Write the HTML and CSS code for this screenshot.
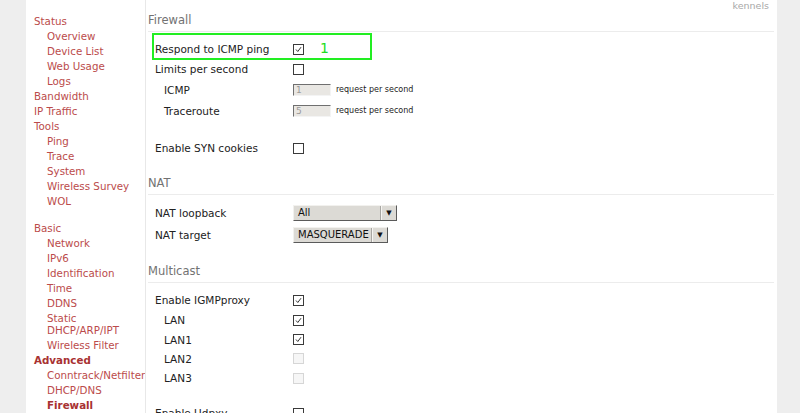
FILE: index.html
```html
<!DOCTYPE html>
<html>
<head>
<meta charset="utf-8">
<link rel="stylesheet" href="styles.css">
</head>
<body>
<div class="page">
  <nav class="sidebar">
    <a class="top">Status</a>
    <a class="sub">Overview</a>
    <a class="sub">Device List</a>
    <a class="sub">Web Usage</a>
    <a class="sub">Logs</a>
    <a class="top">Bandwidth</a>
    <a class="top">IP Traffic</a>
    <a class="top">Tools</a>
    <a class="sub">Ping</a>
    <a class="sub">Trace</a>
    <a class="sub">System</a>
    <a class="sub">Wireless Survey</a>
    <a class="sub">WOL</a>
    <a class="top group">Basic</a>
    <a class="sub">Network</a>
    <a class="sub">IPv6</a>
    <a class="sub">Identification</a>
    <a class="sub">Time</a>
    <a class="sub">DDNS</a>
    <a class="sub">Static DHCP/ARP/IPT</a>
    <a class="sub">Wireless Filter</a>
    <a class="top active">Advanced</a>
    <a class="sub nowrap">Conntrack/Netfilter</a>
    <a class="sub">DHCP/DNS</a>
    <a class="sub active">Firewall</a>
  </nav>
  <main class="content">
    <div class="host">kennels</div>
    <section class="section first">
      <h2 class="section-title">Firewall</h2>
      <div class="rows">
        <div class="row">
          <span class="label">Respond to ICMP ping</span>
          <span class="field"><svg class="cb" width="11" height="11" viewBox="0 0 11 11"><rect x="0.5" y="0.5" width="10" height="10" fill="#fff" stroke="#3a3a3a"/><polyline points="3,5.5 4.8,7.5 8,3.2" fill="none" stroke="#333" stroke-width="1"/></svg></span>
        </div>
        <div class="row">
          <span class="label">Limits per second</span>
          <span class="field"><svg class="cb" width="11" height="11" viewBox="0 0 11 11"><rect x="0.5" y="0.5" width="10" height="10" fill="#fff" stroke="#3a3a3a"/></svg></span>
        </div>
        <div class="row mid">
          <span class="label indent">ICMP</span>
          <span class="field"><span class="input">1</span><span class="unit">request per second</span></span>
        </div>
        <div class="row mid">
          <span class="label indent">Traceroute</span>
          <span class="field"><span class="input">5</span><span class="unit">request per second</span></span>
        </div>
        <div class="spacer"></div>
        <div class="row">
          <span class="label">Enable SYN cookies</span>
          <span class="field"><svg class="cb" width="11" height="11" viewBox="0 0 11 11"><rect x="0.5" y="0.5" width="10" height="10" fill="#fff" stroke="#3a3a3a"/></svg></span>
        </div>
      </div>
      <div class="annot"><span class="annot-num">1</span></div>
    </section>
    <section class="section">
      <h2 class="section-title">NAT</h2>
      <div class="rows">
        <div class="row tall">
          <span class="label">NAT loopback</span>
          <span class="field"><span class="select wide"><span class="sel-text">All</span><span class="sel-btn">&#9660;</span></span></span>
        </div>
        <div class="row tall">
          <span class="label">NAT target</span>
          <span class="field"><span class="select"><span class="sel-text">MASQUERADE</span><span class="sel-btn">&#9660;</span></span></span>
        </div>
      </div>
    </section>
    <section class="section">
      <h2 class="section-title">Multicast</h2>
      <div class="rows">
        <div class="row">
          <span class="label">Enable IGMPproxy</span>
          <span class="field"><svg class="cb" width="11" height="11" viewBox="0 0 11 11"><rect x="0.5" y="0.5" width="10" height="10" fill="#fff" stroke="#3a3a3a"/><polyline points="3,5.5 4.8,7.5 8,3.2" fill="none" stroke="#333" stroke-width="1"/></svg></span>
        </div>
        <div class="row">
          <span class="label indent">LAN</span>
          <span class="field"><svg class="cb" width="11" height="11" viewBox="0 0 11 11"><rect x="0.5" y="0.5" width="10" height="10" fill="#fff" stroke="#3a3a3a"/><polyline points="3,5.5 4.8,7.5 8,3.2" fill="none" stroke="#333" stroke-width="1"/></svg></span>
        </div>
        <div class="row short">
          <span class="label indent">LAN1</span>
          <span class="field"><svg class="cb" width="11" height="11" viewBox="0 0 11 11"><rect x="0.5" y="0.5" width="10" height="10" fill="#fff" stroke="#3a3a3a"/><polyline points="3,5.5 4.8,7.5 8,3.2" fill="none" stroke="#333" stroke-width="1"/></svg></span>
        </div>
        <div class="row short">
          <span class="label indent">LAN2</span>
          <span class="field"><svg class="cb" width="11" height="11" viewBox="0 0 11 11"><rect x="0.5" y="0.5" width="10" height="10" fill="#f6f6f6" stroke="#d6d6d6"/></svg></span>
        </div>
        <div class="row">
          <span class="label indent">LAN3</span>
          <span class="field"><svg class="cb" width="11" height="11" viewBox="0 0 11 11"><rect x="0.5" y="0.5" width="10" height="10" fill="#f6f6f6" stroke="#d6d6d6"/></svg></span>
        </div>
        <div class="spacer small"></div>
        <div class="row">
          <span class="label">Enable Udpxy</span>
          <span class="field"><svg class="cb" width="11" height="11" viewBox="0 0 11 11"><rect x="0.5" y="0.5" width="10" height="10" fill="#fff" stroke="#3a3a3a"/></svg></span>
        </div>
      </div>
    </section>
  </main>
</div>
</body>
</html>
```

FILE: styles.css
```css
html, body {
  margin: 0;
  padding: 0;
  height: 100%;
  overflow: hidden;
  background: #eeeeee;
  font-family: "DejaVu Sans", "Liberation Sans", sans-serif;
}

.page {
  display: flex;
  margin-left: 26px;
  width: 751px;
  height: 413px;
  background: #ffffff;
  overflow: hidden;
}

.sidebar {
  width: 111px;
  flex: none;
  padding: 13px 0 0 8px;
  display: flex;
  flex-direction: column;
}

.sidebar a {
  display: block;
  font-size: 10.3px;
  line-height: 12px;
  padding: 1.5px 0;
  color: #bb4b4b;
  text-decoration: none;
}

.sidebar a.sub {
  padding-left: 13px;
}

.sidebar a.group {
  margin-top: 12px;
}

.sidebar a.active {
  font-weight: bold;
  color: #a83232;
}

.sidebar a.nowrap {
  white-space: nowrap;
}

.content {
  flex: 1;
  position: relative;
  border-left: 1px solid #e8e8e8;
  padding: 0 3px 0 2px;
}

.host {
  height: 12px;
  line-height: 12px;
  text-align: right;
  font-size: 9.5px;
  color: #a8a8a8;
  padding-right: 5px;
}

.section {
  position: relative;
  margin-top: 5px;
}

.section.first {
  margin-top: 0;
}

.section-title {
  margin: 0;
  padding: 13px 0 4px 0;
  font-size: 11.5px;
  line-height: 14px;
  font-weight: normal;
  color: #727272;
  border-bottom: 1px solid #ececec;
}

.section.first .section-title {
  padding-top: 1px;
}

.rows {
  padding-top: 7px;
}

.row {
  display: flex;
  align-items: center;
  height: 20px;
  padding-left: 7px;
  font-size: 10.5px;
  color: #222;
}

.row.mid {
  height: 21px;
}

.row.tall {
  height: 22px;
}

.row.short {
  height: 19px;
}

.spacer {
  height: 17px;
}

.spacer.small {
  height: 15px;
}

.label {
  width: 138px;
  flex: none;
}

.label.indent {
  padding-left: 9px;
  width: 129px;
}

.field {
  display: flex;
  align-items: center;
}

.cb {
  display: block;
}

.input {
  display: block;
  box-sizing: border-box;
  width: 38px;
  height: 12px;
  background: #e9e7e3;
  border-top: 1px solid #6f6f6f;
  border-left: 1px solid #6f6f6f;
  border-bottom: 1px solid #f4f4f4;
  border-right: 1px solid #f4f4f4;
  color: #9a9a9a;
  font-size: 9px;
  line-height: 10px;
  padding-left: 2px;
}

.unit {
  margin-left: 5px;
  font-size: 8px;
  color: #222;
}

.select {
  display: flex;
  align-items: stretch;
  box-sizing: border-box;
  width: 95px;
  height: 16px;
  background: #dcdad5;
  border-top: 1px solid #f2f1ee;
  border-left: 1px solid #f2f1ee;
  border-bottom: 1px solid #5a5a5a;
  border-right: 1px solid #5a5a5a;
}

.select.wide {
  width: 104px;
}

.sel-text {
  flex: 1;
  padding-left: 4px;
  font-size: 10px;
  line-height: 14px;
  color: #111;
  border-right: 1px solid #a8a6a2;
}

.sel-btn {
  width: 14px;
  border-left: 1px solid #f6f5f2;
  font-size: 7px;
  line-height: 14px;
  text-align: center;
  color: #111;
}

.annot {
  position: absolute;
  left: 4px;
  top: 21px;
  width: 216px;
  height: 23px;
  border: 2px solid #22ee22;
}

.annot-num {
  position: absolute;
  left: 166px;
  top: 4px;
  font-size: 14px;
  line-height: 18px;
  color: #22dd22;
}
```
